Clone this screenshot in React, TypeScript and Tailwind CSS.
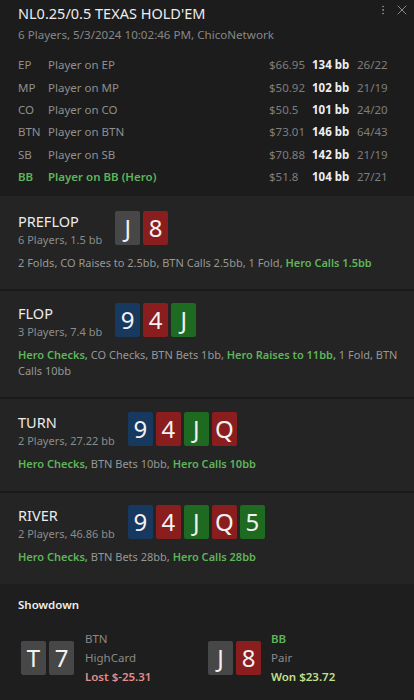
import { MoreVertical, X } from 'lucide-react';

type Color = 'gray' | 'red' | 'blue' | 'green';

const cardBg: Record<Color, string> = {
    gray: 'bg-[#474747]',
    red: 'bg-[#8a1d1d]',
    blue: 'bg-[#17385f]',
    green: 'bg-[#1d6a20]',
};

function Card({ rank, color }: { rank: string; color: Color }) {
    return (
        <div className={`w-[25px] h-[34px] rounded-[2px] flex items-center justify-center text-[24px] leading-none text-[#f2f2f2] ${cardBg[color]}`}>
            {rank}
        </div>
    );
}

const players = [
    { pos: 'EP', name: 'Player on EP', money: '$66.95', bb: '134 bb', stats: '26/22' },
    { pos: 'MP', name: 'Player on MP', money: '$50.92', bb: '102 bb', stats: '21/19' },
    { pos: 'CO', name: 'Player on CO', money: '$50.5', bb: '101 bb', stats: '24/20' },
    { pos: 'BTN', name: 'Player on BTN', money: '$73.01', bb: '146 bb', stats: '64/43' },
    { pos: 'SB', name: 'Player on SB', money: '$70.88', bb: '142 bb', stats: '21/19' },
    { pos: 'BB', name: 'Player on BB (Hero)', money: '$51.8', bb: '104 bb', stats: '27/21', hero: true },
];

type Action = { text: string; hero?: boolean };

function Street({ name, info, cards, actions, top, bottom }: { name: string; info: string; cards: [string, Color][]; actions: Action[]; top: string; bottom: string }) {
    return (
        <div className={`bg-[#232423] pl-[18px] pr-[14px] ${top} ${bottom}`}>
            <div className="flex items-start gap-[13px] h-[34px]">
                <div>
                    <div className="text-[14.5px] leading-[21px] text-[#ececec]">{name}</div>
                    <div className="text-[11px] leading-[16px] text-[#8c8c8c]">{info}</div>
                </div>
                <div className="flex gap-[3px]">
                    {cards.map(([r, c], i) => (
                        <Card key={i} rank={r} color={c} />
                    ))}
                </div>
            </div>
            <p className="mt-[10px] text-[11px] leading-[16px] text-[#979797]">
                {actions.map((a, i) => (
                    <span key={i} className={a.hero ? 'font-semibold text-[#5fb55a]' : ''}>
                        {a.text}
                        {i < actions.length - 1 ? ', ' : ''}
                    </span>
                ))}
            </p>
        </div>
    );
}

export default function App() {
    return (
        <div className="w-[414px] h-[700px] overflow-hidden bg-[#1c1c1c] font-['Noto_Sans',sans-serif] flex flex-col">
            {/* header */}
            <div className="pl-[18px] pr-[4px] pt-[2px] pb-[8px]">
                <div className="flex items-start justify-between">
                    <h1 className="text-[14.5px] leading-[22px] text-[#ededed]">NL0.25/0.5 TEXAS HOLD'EM</h1>
                    <div className="flex items-center gap-[5px] text-[#8a8a8a]">
                        <MoreVertical size={12} strokeWidth={2} />
                        <X size={16} strokeWidth={1.5} />
                    </div>
                </div>
                <div className="mt-[3px] text-[11.6px] leading-[16px] text-[#878787]">6 Players, 5/3/2024 10:02:46 PM, ChicoNetwork</div>
                <div className="mt-[11px] flex flex-col">
                    {players.map((p) => (
                        <div key={p.pos} className="grid grid-cols-[30px_1fr_43px_45px_53px] h-[22.4px] items-center text-[11.5px] leading-[16px]">
                            <span className={p.hero ? 'font-semibold text-[#5fb55a]' : 'text-[#8f8f8f]'}>{p.pos}</span>
                            <span className={p.hero ? 'font-semibold text-[#5fb55a]' : 'text-[#8f8f8f]'}>{p.name}</span>
                            <span className="text-[#7e7e7e]">{p.money}</span>
                            <span className="font-bold text-[#eeeeee]">{p.bb}</span>
                            <span className="text-[#7e7e7e]">{p.stats}</span>
                        </div>
                    ))}
                </div>
            </div>

            <Street
                name="PREFLOP"
                info="6 Players, 1.5 bb"
                top="pt-[15px]"
                bottom="pb-[18px]"
                cards={[['J', 'gray'], ['8', 'red']]}
                actions={[{ text: '2 Folds' }, { text: 'CO Raises to 2.5bb' }, { text: 'BTN Calls 2.5bb' }, { text: '1 Fold' }, { text: 'Hero Calls 1.5bb', hero: true }]}
            />
            <div className="h-[2px] bg-[#191919]" />
            <Street
                name="FLOP"
                info="3 Players, 7.4 bb"
                top="pt-[12px]"
                bottom="pb-[18px]"
                cards={[['9', 'blue'], ['4', 'red'], ['J', 'green']]}
                actions={[{ text: 'Hero Checks', hero: true }, { text: 'CO Checks' }, { text: 'BTN Bets 1bb' }, { text: 'Hero Raises to 11bb', hero: true }, { text: '1 Fold' }, { text: 'BTN Calls 10bb' }]}
            />
            <div className="h-[2px] bg-[#191919]" />
            <Street
                name="TURN"
                info="2 Players, 27.22 bb"
                top="pt-[13px]"
                bottom="pb-[19px]"
                cards={[['9', 'blue'], ['4', 'red'], ['J', 'green'], ['Q', 'red']]}
                actions={[{ text: 'Hero Checks', hero: true }, { text: 'BTN Bets 10bb' }, { text: 'Hero Calls 10bb', hero: true }]}
            />
            <div className="h-[2px] bg-[#191919]" />
            <Street
                name="RIVER"
                info="2 Players, 46.86 bb"
                top="pt-[12px]"
                bottom="pb-[19px]"
                cards={[['9', 'blue'], ['4', 'red'], ['J', 'green'], ['Q', 'red'], ['5', 'green']]}
                actions={[{ text: 'Hero Checks', hero: true }, { text: 'BTN Bets 28bb' }, { text: 'Hero Calls 28bb', hero: true }]}
            />

            {/* showdown */}
            <div className="flex-1 bg-[#1d1e1d] px-[18px] pt-[13px]">
                <div className="text-[11.5px] leading-[16px] font-semibold text-[#ececec]">Showdown</div>
                <div className="mt-[16px] flex">
                    <div className="w-[190px] flex items-center gap-[11px] pl-[3px]">
                        <div className="flex gap-[3px]">
                            <Card rank="T" color="gray" />
                            <Card rank="7" color="gray" />
                        </div>
                        <div className="text-[11.5px] leading-[19px]">
                            <div className="text-[#8a8a8a]">BTN</div>
                            <div className="text-[#8a8a8a]">HighCard</div>
                            <div className="font-semibold text-[#e38d8d]">Lost $-25.31</div>
                        </div>
                    </div>
                    <div className="flex items-center gap-[10px]">
                        <div className="flex gap-[3px]">
                            <Card rank="J" color="gray" />
                            <Card rank="8" color="red" />
                        </div>
                        <div className="text-[11.5px] leading-[19px]">
                            <div className="font-semibold text-[#5fb55a]">BB</div>
                            <div className="text-[#8a8a8a]">Pair</div>
                            <div className="font-semibold text-[#c3e08a]">Won $23.72</div>
                        </div>
                    </div>
                </div>
            </div>
        </div>
    );
}
